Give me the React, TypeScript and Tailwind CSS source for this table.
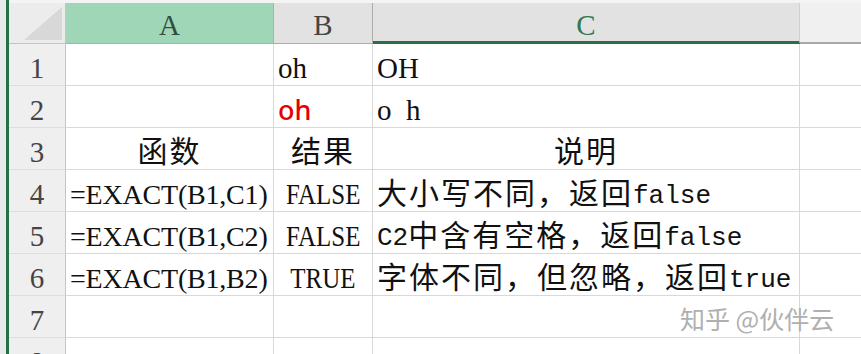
import React from 'react';

const serif = 'font-["Liberation_Serif","Noto_Sans_CJK_SC",serif]';

type Row = {
  n: string;
  a?: React.ReactNode;
  b?: React.ReactNode;
  c?: React.ReactNode;
  aCenter?: boolean;
  bCenter?: boolean;
  cCenter?: boolean;
};

const Mono: React.FC<{ children: React.ReactNode }> = ({ children }) => (
  <span className='font-["Liberation_Mono",monospace] text-[26px] tracking-normal'>{children}</span>
);

// CJK runs a touch wider, like SimSun in the sheet
const Han: React.FC<{ children: React.ReactNode }> = ({ children }) => (
  <span className="text-[30px] tracking-[2px]">{children}</span>
);

const Narrow: React.FC<{ children: React.ReactNode }> = ({ children }) => (
  <span className="inline-block scale-x-[0.86]">{children}</span>
);

const Formula: React.FC<{ children: React.ReactNode }> = ({ children }) => (
  <span className="inline-block text-[28px] tracking-[-0.2px]">{children}</span>
);

const rows: Row[] = [
  { n: '1', b: 'oh', c: 'OH' },
  {
    n: '2',
    b: (
      <span className='relative bottom-[1px] font-["Noto_Sans",sans-serif] font-medium text-[27px] leading-[29px] text-[#e50000]'>
        oh
      </span>
    ),
    c: 'o\u2002h',
  },
  {
    n: '3',
    a: <Han>函数</Han>,
    b: <Han>结果</Han>,
    c: <Han>说明</Han>,
    aCenter: true,
    bCenter: true,
    cCenter: true,
  },
  {
    n: '4',
    a: <Formula>=EXACT(B1,C1)</Formula>,
    b: <Narrow>FALSE</Narrow>,
    bCenter: true,
    c: <><Han>大小写不同，返回</Han><Mono>false</Mono></>,
  },
  {
    n: '5',
    a: <Formula>=EXACT(B1,C2)</Formula>,
    b: <Narrow>FALSE</Narrow>,
    bCenter: true,
    c: <><Mono>C2</Mono><Han>中含有空格，返回</Han><Mono>false</Mono></>,
  },
  {
    n: '6',
    a: <Formula>=EXACT(B1,B2)</Formula>,
    b: <Narrow>TRUE</Narrow>,
    bCenter: true,
    c: <><Han>字体不同，但忽略，返回</Han><Mono>true</Mono></>,
  },
  { n: '7' },
  { n: '8' },
];

const Cell: React.FC<{ center?: boolean; children?: React.ReactNode }> = ({ center, children }) => (
  <div
    className={`flex items-end h-[42px] border-r border-b border-[#d9d9d9] pb-[2px] overflow-hidden whitespace-nowrap leading-none text-[29px] text-[#111] ${
      center ? 'justify-center' : 'pl-[4px]'
    }`}
  >
    {children}
  </div>
);

export default function App() {
  return (
    <div className={`relative flex w-[861px] h-[354px] overflow-hidden bg-white ${serif}`}>
      {/* left frame */}
      <div className="w-[6px] h-full shrink-0 bg-[#e9e9e9]" />
      <div className="w-[3px] h-full shrink-0 bg-[#256f46]" />

      <div className="flex flex-col flex-1">
        <div className="h-[3px] shrink-0 bg-[#f4f4f4]" />

        <div className="grid shrink-0 grid-cols-[57px_208px_99px_427px_1fr]">
          {/* column headers */}
          <div className="relative h-[41px] bg-[#ececec] border-r border-b border-[#c4c4c4]">
            <svg className="absolute right-[3px] bottom-[3px]" width="38" height="33" viewBox="0 0 38 33">
              <polygon points="38,0 38,33 0,33" fill="#d8d8d8" />
            </svg>
          </div>
          <div className="flex items-end justify-center h-[41px] pb-[3px] bg-[#9fd6b8] border-r border-b border-[#9ab9a6] leading-none text-[29px] text-[#2f4f3d]">
            A
          </div>
          <div className="flex items-end justify-center h-[41px] pb-[3px] bg-[#e2e2e2] border-r border-b border-[#ababab] leading-none text-[29px] text-[#444]">
            B
          </div>
          <div className="flex items-end justify-center h-[41px] pb-[1px] bg-[#e2e2e2] border-r border-[#d0d0d0] border-b-[3px] border-b-[#2c6e49] leading-none text-[29px] text-[#2c7a52]">
            C
          </div>
          <div className="h-[41px] bg-[#f0f0f0] border-b-2 border-[#a9a9a9]" />

          {rows.map((r) => (
            <React.Fragment key={r.n}>
              <div className="flex items-end justify-center h-[42px] pb-[2px] bg-[#efefef] border-r border-r-[#c4c4c4] border-b border-b-[#dedede] leading-none text-[29px] text-[#444]">
                {r.n}
              </div>
              <Cell center={r.aCenter}>{r.a}</Cell>
              <Cell center={r.bCenter}>{r.b}</Cell>
              <Cell center={r.cCenter}>{r.c}</Cell>
              <div className="h-[42px] border-b border-[#d9d9d9]" />
            </React.Fragment>
          ))}
        </div>
      </div>

      {/* watermark */}
      <div className='absolute left-[680px] top-[306px] font-["Noto_Sans_CJK_SC",sans-serif] text-[25px] leading-none text-[#b0b0b0] [text-shadow:1px_1px_0_rgba(255,255,255,0.8)]'>
        知乎 @伙伴云
      </div>
    </div>
  );
}
